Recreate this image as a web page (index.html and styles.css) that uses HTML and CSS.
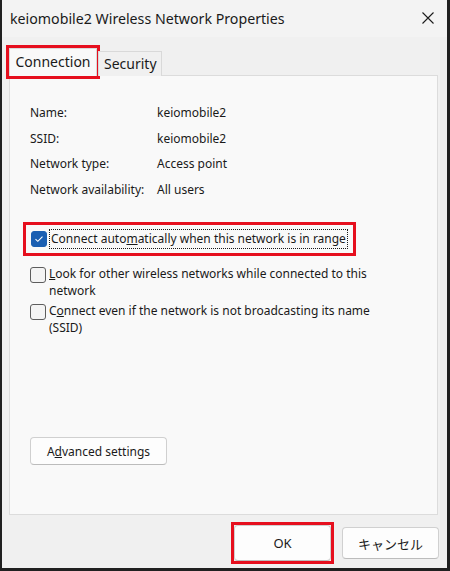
FILE: index.html
```html
<!DOCTYPE html>
<html lang="en">
<head>
<meta charset="utf-8">
<title>keiomobile2 Wireless Network Properties</title>
<link rel="stylesheet" href="styles.css">
</head>
<body>
<div class="window">
  <div class="titlebar">
    <span class="title">keiomobile2 Wireless Network Properties</span>
    <span class="close">
      <svg width="12" height="12" viewBox="0 0 12 12"><path d="M0.5 0.5 L11.5 11.5 M11.5 0.5 L0.5 11.5" stroke="#1b1b1b" stroke-width="1.1" fill="none"/></svg>
    </span>
  </div>
  <div class="body">
    <div class="tabs">
      <div class="tab active">Connection</div>
      <div class="tab">Security</div>
    </div>
    <div class="panel">
      <div class="info">
        <span class="lbl">Name:</span><span class="val">keiomobile2</span>
        <span class="lbl">SSID:</span><span class="val">keiomobile2</span>
        <span class="lbl">Network type:</span><span class="val">Access point</span>
        <span class="lbl">Network availability:</span><span class="val">All users</span>
      </div>
      <div class="highlight">
        <span class="check on">
          <svg width="10" height="8" viewBox="0 0 10 8"><path d="M1.5 4.2 L3.8 6.3 L8.5 1.6" stroke="#fff" stroke-width="1.1" fill="none"/></svg>
        </span>
        <span class="focus">Connect auto<u>m</u>atically when this network is in range</span>
      </div>
      <div class="option">
        <span class="check"></span>
        <span class="otext"><u>L</u>ook for other wireless networks while connected to this network</span>
      </div>
      <div class="option">
        <span class="check"></span>
        <span class="otext">C<u>o</u>nnect even if the network is not broadcasting its name (SSID)</span>
      </div>
      <div class="spacer"></div>
      <button class="btn adv">A<u>d</u>vanced settings</button>
    </div>
    <div class="footer">
      <span class="okwrap"><button class="btn ok">OK</button></span>
      <button class="btn cancel">キャンセル</button>
    </div>
  </div>
</div>
</body>
</html>
```

FILE: styles.css
```css
html, body {
  margin: 0;
  padding: 0;
}
body {
  width: 450px;
  height: 571px;
  background: #202020;
  font-family: "Noto Sans", "Noto Sans CJK JP", sans-serif;
  color: #1a1a1a;
  overflow: hidden;
}
.window {
  margin-left: 2px;
  width: 445px;
  height: 568px;
  background: #f0f0f0;
  display: flex;
  flex-direction: column;
}
.titlebar {
  height: 37px;
  flex: none;
  display: flex;
  align-items: center;
  justify-content: space-between;
  padding: 0 13px 0 8px;
  background: #f3f3f3;
}
.title {
  font-size: 14.2px;
  color: #1a1a1a;
  margin-top: -1px;
}
.close {
  display: flex;
  margin-top: -2px;
}
.body {
  flex: 1;
  display: flex;
  flex-direction: column;
  padding: 11px 9px 0 7px;
}
.tabs {
  display: flex;
  align-items: flex-end;
  height: 28px;
  margin-bottom: -1px;
  position: relative;
  z-index: 1;
}
.tab {
  font-size: 14px;
  line-height: 24px;
  height: 25px;
  box-sizing: border-box;
  padding: 0 4px 0 5px;
  border: 1px solid #d9d9d9;
  border-bottom: none;
  background: #f0f0f0;
  margin-left: 1px;
}
.tab.active {
  height: 28px;
  line-height: 26px;
  width: 88px;
  text-align: center;
  margin-left: 0;
  padding: 0;
  background: #f9f9f9;
  outline: 3px solid #e60f1e;
}
.panel {
  flex: 1;
  background: #f9f9f9;
  border: 1px solid #dcdcdc;
  display: flex;
  flex-direction: column;
  padding: 24px 20px 49px 20px;
  font-size: 12px;
}
.info {
  display: grid;
  grid-template-columns: 127px auto;
  grid-auto-rows: 25.7px;
  align-items: center;
  line-height: 16px;
}
.highlight {
  display: flex;
  align-items: center;
  align-self: flex-start;
  margin: 19px 0 0 -7px;
  height: 34px;
  box-sizing: border-box;
  border: 3px solid #e60f1e;
  padding: 0 5px;
}
.check {
  width: 16px;
  height: 16px;
  box-sizing: border-box;
  border: 1px solid #5d5d5d;
  border-radius: 3px;
  background: #f4f4f4;
  flex: none;
  display: flex;
  align-items: center;
  justify-content: center;
}
.check.on {
  background: #1b5fb2;
  border-color: #1b5fb2;
}
.focus {
  margin-left: 2px;
  border: 1px dotted #1a1a1a;
  padding: 1px;
  line-height: 16px;
}
.option {
  display: flex;
  align-items: flex-start;
  margin-top: 9px;
  line-height: 17px;
  width: 360px;
}
.option + .option {
  margin-top: 3px;
}
.option .check {
  margin-top: 2px;
}
.otext {
  margin-left: 3px;
}
.spacer {
  flex: 1;
}
.btn {
  font-family: "Noto Sans", "Noto Sans CJK JP", sans-serif;
  font-size: 12px;
  color: #1a1a1a;
  background: #fdfdfd;
  border: 1px solid #d0d0d0;
  border-bottom-color: #bcbcbc;
  border-radius: 4px;
  padding: 0;
  box-sizing: border-box;
}
.adv {
  width: 137px;
  height: 28px;
  align-self: flex-start;
}
.footer {
  height: 53px;
  flex: none;
  display: flex;
  justify-content: flex-end;
  align-items: center;
  gap: 8px;
  padding-top: 3px;
  box-sizing: border-box;
  margin-right: -1px;
}
.okwrap {
  display: flex;
  border: 3px solid #e60f1e;
}
.ok {
  width: 97px;
  height: 36px;
  font-size: 13px;
}
.cancel {
  width: 97px;
  height: 32px;
  font-size: 13px;
}
```
